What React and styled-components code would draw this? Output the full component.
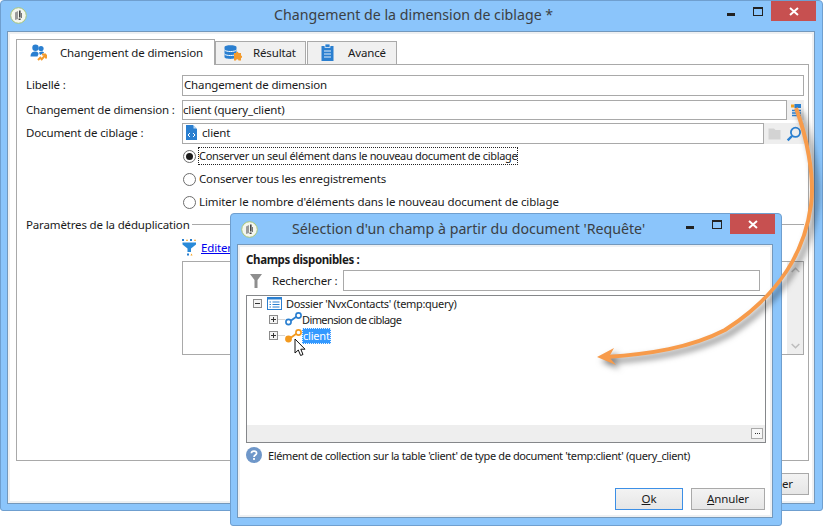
import React from 'react';
import styled, { createGlobalStyle } from 'styled-components';

const Global = createGlobalStyle`
  html, body { margin: 0; padding: 0; background: #fff; }
  body { width: 823px; height: 526px; overflow: hidden; font: 11.5px "Noto Sans", "Open Sans", sans-serif; letter-spacing: -0.15px; color: #1a1a1a; }
  * { box-sizing: border-box; }
`;

const Desktop = styled.div`
  position: relative;
  width: 823px;
  height: 526px;
  overflow: hidden;
`;
const Win = styled.div`
  position: absolute;
  left: ${p => p.$x}px;
  top: ${p => p.$y}px;
  width: ${p => p.$w}px;
  height: ${p => p.$h}px;
  display: flex;
  flex-direction: column;
  background: #8bc5fb;
  border: 1px solid #6f9fcf;
  border-radius: 4px 4px 3px 3px;
`;
const TitleBar = styled.div`
  height: ${p => p.$h}px;
  flex: none;
  display: flex;
  align-items: flex-start;
  padding-left: ${p => p.$left}px;
`;
const AppIcon = styled.div`
  width: 17px;
  height: 17px;
  flex: none;
  margin-top: ${p => p.$top}px;
`;
const Title = styled.div`
  font-size: 14.2px;
  letter-spacing: 0;
  line-height: 20px;
  margin-top: ${p => p.$top}px;
  margin-left: ${p => p.$ml}px;
  color: #3b3f44;
  white-space: nowrap;
`;
const Controls = styled.div`
  margin-left: auto;
  display: flex;
  align-items: flex-start;
  margin-right: ${p => p.$right}px;
`;
const MinBtn = styled.div`
  width: 8px;
  height: 3px;
  background: #222;
  margin-top: 12px;
`;
const MaxBtn = styled.div`
  width: 10px;
  height: 9px;
  margin: 6px 8px 0 18px;
  border: 1px solid #222;
  border-top-width: 2px;
`;
const CloseBtn = styled.div`
  width: 45px;
  height: 20px;
  background: #c75050;
  color: #fff;
  display: flex;
  align-items: center;
  justify-content: center;
`;
const Client = styled.div`
  flex: 1;
  min-height: 0;
  margin: ${p => p.$m};
  background: #fff;
  border: 1px solid #7398bc;
  box-shadow: inset 2px 2px 0 #eef0f2, inset -2px -2px 0 #eef0f2;
  padding: ${p => p.$p};
  display: flex;
  flex-direction: column;
`;
const Tabs = styled.div`
  display: flex;
  align-items: flex-end;
  height: 25px;
  flex: none;
  position: relative;
  z-index: 1;
  margin-bottom: -1px;
`;
const Tab = styled.div`
  width: ${p => p.$w}px;
  height: ${p => (p.$active ? 26 : 24)}px;
  margin-left: ${p => p.$ml || 0}px;
  display: flex;
  align-items: center;
  padding-left: ${p => p.$pl}px;
  padding-bottom: 1px;
  border: 1px solid #a9a9a9;
  border-bottom: ${p => (p.$active ? 'none' : '1px solid #a9a9a9')};
  background: ${p => (p.$active ? '#fff' : '#f0f0f0')};
`;
const TabLabel = styled.span`
  margin-left: ${p => p.$ml}px;
  white-space: nowrap;
`;
const Panel = styled.div`
  height: 397px;
  flex: none;
  border: 1px solid #a9a9a9;
  padding: 10px 4px 0 9px;
  display: flex;
  flex-direction: column;
`;
const Row = styled.div`
  display: grid;
  grid-template-columns: 156px 1fr;
  align-items: center;
  margin-top: ${p => p.$mt || 0}px;
`;
const Label = styled.label`
  white-space: nowrap;
  padding-bottom: 2px;
`;
const Field = styled.div`
  display: flex;
  height: ${p => p.$h || 21}px;
`;
const Input = styled.div`
  flex: 1;
  min-width: 0;
  align-self: stretch;
  display: flex;
  align-items: center;
  gap: 5px;
  border: 1px solid #a9a9a9;
  padding: 0 0 2px ${p => p.$pl ?? 0}px;
  white-space: nowrap;
`;
const SideBtn = styled.div`
  width: ${p => p.$w}px;
  background: #eeeeee;
  display: flex;
  align-items: center;
  justify-content: center;
`;
const RadioRow = styled.div`
  height: 23px;
  margin-left: 156px;
  display: flex;
  align-items: center;
  gap: 3px;
  margin-top: ${p => p.$mt || 0}px;
`;
const Radio = styled.span`
  width: 13px;
  height: 13px;
  flex: none;
  margin-left: 1px;
  border-radius: 50%;
  border: 1px solid #6d6d6d;
  background: #fff;
  display: flex;
  align-items: center;
  justify-content: center;
  &::after {
    content: '';
    width: 7px;
    height: 7px;
    border-radius: 50%;
    background: ${p => (p.$on ? '#1c1c1c' : 'transparent')};
  }
`;
const RadioText = styled.span`
  white-space: nowrap;
  line-height: 16px;
  font-size: ${p => p.$fs || 11.5}px;
  letter-spacing: ${p => p.$ls ?? -0.15}px;
  margin-top: -1px;
  outline: ${p => (p.$focus ? '1px dotted #222' : 'none')};
`;
const Legend = styled.div`
  height: 22px;
  padding-bottom: 1px;
  display: flex;
  align-items: center;
  gap: 2px;
  white-space: nowrap;
  &::after {
    content: '';
    flex: 1;
    height: 1px;
    background: #a9a9a9;
  }
`;
const LinkRow = styled.div`
  margin: 3px 0 0 156px;
  height: 17px;
  display: flex;
  align-items: center;
  gap: 4px;
`;
const Link = styled.a`
  color: #0000ee;
  text-decoration: underline;
`;
const TextBox = styled.div`
  margin: 5px 0 0 156px;
  height: 94px;
  border: 1px solid #a9a9a9;
  display: flex;
  justify-content: flex-end;
`;
const Scroll = styled.div`
  width: 16px;
  background: #eeeeee;
  display: flex;
  flex-direction: column;
  justify-content: space-between;
  align-items: center;
  padding: 5px 0;
`;
const Footer = styled.div`
  margin-top: ${p => p.$mt};
  margin-right: ${p => p.$mr || 0}px;
  display: flex;
  justify-content: flex-end;
  gap: 8px;
`;
const Button = styled.div`
  height: 22px;
  width: ${p => p.$w}px;
  padding-bottom: 1px;
  background: linear-gradient(#f3f3f3, #e6e6e6);
  border: 1px solid ${p => (p.$primary ? '#3c8fe6' : '#a9a9a9')};
  display: flex;
  align-items: center;
  justify-content: center;
  u { text-decoration: underline; }
`;
const Bold = styled.div`
  font-weight: 700;
  line-height: 16px;
  letter-spacing: -0.35px;
`;
const SearchRow = styled.div`
  display: flex;
  align-items: center;
  margin: 2px 6px 0 4px;
  height: 21px;
`;
const SearchLabel = styled.span`
  margin: 0 6px 0 10px;
  width: 65px;
  white-space: nowrap;
`;
const TreeBox = styled.div`
  margin-top: 4px;
  height: 148px;
  flex: none;
  border: 1px solid #85878a;
  display: flex;
  flex-direction: column;
`;
const TreeBody = styled.div`
  flex: 1;
  padding: 0 0 0 6px;
  font-size: 11px;
`;
const TreeRow = styled.div`
  height: ${p => p.$h || 16.5}px;
  display: flex;
  align-items: center;
  padding-left: ${p => p.$indent}px;
  white-space: nowrap;
`;
const Expander = styled.span`
  width: 9px;
  height: 9px;
  flex: none;
  border: 1px solid #8b8b8b;
  background: #f4f4f4;
  position: relative;
  &::before {
    content: '';
    position: absolute;
    left: 1px;
    top: 3px;
    width: 5px;
    height: 1px;
    background: #333;
  }
  &::after {
    content: '';
    position: absolute;
    left: 3px;
    top: 1px;
    width: 1px;
    height: 5px;
    background: #333;
    display: ${p => (p.$open ? 'none' : 'block')};
  }
`;
const Connector = styled.span`
  width: ${p => p.$w}px;
  height: 1px;
  flex: none;
  background: #d6d6d6;
`;
const NodeIcon = styled.span`
  display: flex;
  flex: none;
  margin-left: ${p => p.$ml || 0}px;
`;
const NodeText = styled.span`
  margin-left: ${p => p.$ml || 0}px;
  line-height: 15px;
  letter-spacing: ${p => p.$ls}px;
`;
const Selected = styled.span`
  background: #3399ff;
  color: #fff;
  outline: 1px dotted #e8f3ff;
  outline-offset: -1px;
  padding: 0 1px;
  line-height: 16px;
  letter-spacing: -0.2px;
`;
const TreeBar = styled.div`
  height: 17px;
  flex: none;
  background: #eeeeee;
  display: flex;
  justify-content: flex-end;
  align-items: center;
  padding-right: 2px;
`;
const MoreBtn = styled.div`
  width: 12px;
  height: 11px;
  border: 1px solid #a9a9a9;
  background: #f7f7f7;
  display: flex;
  align-items: center;
  justify-content: center;
  gap: 1px;
  i { width: 1px; height: 1px; background: #333; display: block; }
`;
const HelpRow = styled.div`
  margin-top: 4px;
  height: 16px;
  display: flex;
  align-items: center;
  gap: 6px;
  white-space: nowrap;
  font-size: 11px;
  letter-spacing: -0.38px;
`;
const Overlay = styled.svg`
  position: absolute;
  left: 0;
  top: 0;
  pointer-events: none;
  filter: drop-shadow(4px 4px 3px rgba(0, 0, 0, 0.55));
`;
const Cursor = styled.svg`
  position: absolute;
  left: 294px;
  top: 338px;
`;

const LogoIcon = () => (
  <svg width="17" height="17" viewBox="0 0 17 17">
    <circle cx="8.5" cy="8.5" r="7.8" fill="#f4f6ee" stroke="#a8c67a" strokeWidth="1" />
    <path d="M5 5.5 L8 4 V12 L5 13 Z" fill="#9a9a9a" />
    <path d="M9 3.5 h1.6 v7 H9 Z M8.6 11.5 h2 v1.6 h-2 Z" fill="#444" />
    <path d="M11.5 6 v5" stroke="#777" strokeWidth="1" />
  </svg>
);
const XGlyph = () => (
  <svg width="10" height="9" viewBox="0 0 10 9">
    <path d="M1 1 L9 8 M9 1 L1 8" stroke="#fff" strokeWidth="2" />
  </svg>
);
const UsersIcon = () => (
  <svg width="17" height="17" viewBox="0 0 17 17" style={{ flex: 'none' }}>
    <circle cx="5.5" cy="3.8" r="3.2" fill="#2a7fd0" />
    <path d="M0.5 12.5 C0.5 8.5 3 7.5 5.5 7.5 C8 7.5 8.5 9 8.5 10 L7.5 12.5 Z" fill="#2a7fd0" />
    <circle cx="11" cy="4.5" r="2.6" fill="#2a7fd0" />
    <path d="M9 8.5 C11 7 14 7.5 14 9 L10 11 Z" fill="#2a7fd0" />
    <path d="M8 16 L11 13 M11 16 L16 10.5 M16 10.5 V14.5 M16 10.5 H12" stroke="#f39a2c" strokeWidth="2" fill="none" />
  </svg>
);
const DbIcon = () => (
  <svg width="18" height="17" viewBox="0 0 18 17" style={{ flex: 'none' }}>
    <path d="M0.5 3 C0.5 0.5 12.5 0.5 12.5 3 V13 C12.5 15.5 0.5 15.5 0.5 13 Z" fill="#2a7fd0" />
    <path d="M0.5 6 C2 8 11 8 12.5 6 M0.5 10 C2 12 11 12 12.5 10" stroke="#fff" strokeWidth="1" fill="none" />
    <path d="M10 9 h2 a1.2 1.2 0 0 1 2.4 0 h2.6 v2.5 a1.2 1.2 0 0 1 0 2.5 v2.6 h-2.5 a1.2 1.2 0 0 0-2.5 0 H10 Z" fill="#f39a2c" />
  </svg>
);
const ClipIcon = () => (
  <svg width="13" height="17" viewBox="0 0 13 17" style={{ flex: 'none' }}>
    <rect x="0.5" y="2" width="12" height="15" fill="#2a7fd0" />
    <rect x="4" y="0" width="5" height="3.5" fill="#2a7fd0" stroke="#fff" strokeWidth="0.7" />
    <path d="M3 7 h7 M3 10 h7 M3 13 h7" stroke="#dfeefb" strokeWidth="1" />
  </svg>
);
const DocIcon = () => (
  <svg width="11" height="15" viewBox="0 0 11 15" style={{ flex: 'none' }}>
    <path d="M0 0 H7 L11 4 V15 H0 Z" fill="#2a7fd0" />
    <path d="M7.5 0 L11 3.5 H7.5 Z" fill="#bcd9f3" />
    <path d="M4 8 L2 10 L4 12 M7 8 L9 10 L7 12" stroke="#fff" strokeWidth="1" fill="none" />
  </svg>
);
const ListMiniIcon = () => (
  <svg width="12" height="13" viewBox="0 0 12 13">
    <rect x="1" y="0.5" width="3.5" height="3" fill="#f3a21f" />
    <rect x="4.5" y="0" width="6.5" height="4" fill="#2a7fd0" />
    <path d="M2 6.5 H11 M2 9 H11 M2 11.5 H11" stroke="#2a7fd0" strokeWidth="1.3" />
  </svg>
);
const FolderIcon = () => (
  <svg width="13" height="12" viewBox="0 0 13 12">
    <path d="M0.5 0.5 H6 L7.5 2 H12.5 V11.5 H0.5 Z" fill="#d3d3d3" />
  </svg>
);
const SearchIcon = () => (
  <svg width="16" height="16" viewBox="0 0 16 16">
    <circle cx="9.5" cy="6.3" r="4.6" fill="none" stroke="#2a7fd0" strokeWidth="1.8" />
    <path d="M6 10 L1.7 14.3" stroke="#2a7fd0" strokeWidth="2.4" />
  </svg>
);
const FilterDots = () => (
  <svg width="15" height="17" viewBox="0 0 15 17" style={{ flex: 'none' }}>
    <rect x="0" y="0" width="2" height="2" fill="#2a7fd0" />
    <path d="M4 2 L5 0 L6 2 Z" fill="#f3a21f" />
    <rect x="8" y="0" width="2" height="2" fill="#2a7fd0" />
    <path d="M12 2 L13 0 L14 2 Z" fill="#f3a21f" />
    <path d="M0.5 3.5 H14 V5.5 L9 9.5 V13 H5.5 V9.5 L0.5 5.5 Z" fill="#2a8ad8" />
    <rect x="5" y="14.5" width="2" height="2" fill="#2a7fd0" />
    <path d="M8.5 16.5 L9.5 14.5 L10.5 16.5 Z" fill="#f3a21f" />
  </svg>
);
const GreyFunnel = () => (
  <svg width="12" height="14" viewBox="0 0 12 14" style={{ flex: 'none' }}>
    <path d="M0 0 H12 L7.5 6 V14 H4.5 V6 Z" fill="#8e8e8e" />
  </svg>
);
const Chevron = ({ up }) => (
  <svg width="9" height="6" viewBox="0 0 9 6">
    <path d={up ? 'M0.7 5 L4.5 1.3 L8.3 5' : 'M0.7 1 L4.5 4.7 L8.3 1'} stroke="#bdbdbd" strokeWidth="1.6" fill="none" />
  </svg>
);
const ListIcon = () => (
  <svg width="15" height="13" viewBox="0 0 15 13">
    <rect x="0.5" y="0.5" width="14" height="12" fill="#fff" stroke="#2a7fd0" />
    <rect x="0.5" y="0.5" width="14" height="2" fill="#2a7fd0" />
    <path d="M2.5 5 h1.5 M5.5 5 h7 M2.5 7.5 h1.5 M5.5 7.5 h7 M2.5 10 h1.5 M5.5 10 h7" stroke="#2a7fd0" strokeWidth="1" />
  </svg>
);
const LinkIcon = ({ color, solid }) => (
  <svg width="17" height="14" viewBox="0 0 17 14">
    <path d="M4 10 L13 3.5" stroke={color} strokeWidth="1.8" />
    <circle cx="3.5" cy="10" r="2.6" fill={solid ? color : '#fff'} stroke={color} strokeWidth="1.6" />
    <circle cx="13.5" cy="3.5" r="2.6" fill="#fff" stroke={color} strokeWidth="1.6" />
  </svg>
);
const HelpIcon = () => (
  <svg width="16" height="16" viewBox="0 0 16 16" style={{ flex: 'none' }}>
    <circle cx="8" cy="8" r="8" fill="#6f97c9" />
    <path d="M5.4 6.2 C5.4 3.4 10.6 3.4 10.6 6.2 C10.6 8 8 8 8 10" stroke="#fff" strokeWidth="1.7" fill="none" />
    <rect x="7.1" y="11" width="1.8" height="1.9" fill="#fff" />
  </svg>
);

export default function App() {
  return (
    <Desktop>
      <Global />
      <Win $x={0} $y={0} $w={823} $h={511}>
        <TitleBar $h={30} $left={9}>
          <AppIcon $top={6}><LogoIcon /></AppIcon>
          <Title $top={4} $ml={247}>Changement de la dimension de ciblage *</Title>
          <Controls $right={6}>
            <MinBtn />
            <MaxBtn />
            <CloseBtn><XGlyph /></CloseBtn>
          </Controls>
        </TitleBar>
        <Client $m="0 7px 6px 6px" $p="8px 5px 0 8px">
          <Tabs>
            <Tab $active $w={199} $pl={13}><UsersIcon /><TabLabel $ml={13}>Changement de dimension</TabLabel></Tab>
            <Tab $w={91} $pl={8}><DbIcon /><TabLabel $ml={11}>Résultat</TabLabel></Tab>
            <Tab $w={90} $pl={13} $ml={1}><ClipIcon /><TabLabel $ml={14}>Avancé</TabLabel></Tab>
          </Tabs>
          <Panel>
            <Row>
              <Label>Libellé :</Label>
              <Field><Input $pl={1}>Changement de dimension</Input></Field>
            </Row>
            <Row $mt={4}>
              <Label>Changement de dimension :</Label>
              <Field $h={20}>
                <Input>client (query_client)</Input>
                <SideBtn $w={17}><ListMiniIcon /></SideBtn>
              </Field>
            </Row>
            <Row $mt={3}>
              <Label>Document de ciblage :</Label>
              <Field>
                <Input $pl={3}><DocIcon />client</Input>
                <SideBtn $w={20}><FolderIcon /></SideBtn>
                <SideBtn $w={20}><SearchIcon /></SideBtn>
              </Field>
            </Row>
            <RadioRow $mt={1}><Radio $on /><RadioText $focus $fs={11} $ls={-0.31}>Conserver un seul élément dans le nouveau document de ciblage</RadioText></RadioRow>
            <RadioRow><Radio /><RadioText>Conserver tous les enregistrements</RadioText></RadioRow>
            <RadioRow><Radio /><RadioText $ls={-0.1}>Limiter le nombre d'éléments dans le nouveau document de ciblage</RadioText></RadioRow>
            <Legend>Paramètres de la déduplication</Legend>
            <LinkRow><FilterDots /><Link>Editer</Link></LinkRow>
            <TextBox>
              <Scroll><Chevron up /><Chevron /></Scroll>
            </TextBox>
          </Panel>
          <Footer $mt="12px"><Button $w={74}>Annuler</Button></Footer>
        </Client>
      </Win>

      <Win $x={230} $y={213} $w={552} $h={313}>
        <TitleBar $h={30} $left={10}>
          <AppIcon $top={7}><LogoIcon /></AppIcon>
          <Title $top={5} $ml={34}>Sélection d'un champ à partir du document 'Requête'</Title>
          <Controls $right={6}>
            <MinBtn />
            <MaxBtn />
            <CloseBtn><XGlyph /></CloseBtn>
          </Controls>
        </TitleBar>
        <Client $m="0 8px 7px 6px" $p="7px 6px 7px 8px">
          <Bold>Champs disponibles :</Bold>
          <SearchRow>
            <GreyFunnel />
            <SearchLabel>Rechercher :</SearchLabel>
            <Input />
          </SearchRow>
          <TreeBox>
            <TreeBody>
              <TreeRow $indent={0} $h={15}><Expander $open /><NodeIcon $ml={5}><ListIcon /></NodeIcon><NodeText $ml={4} $ls={-0.31}>Dossier 'NvxContacts' (temp:query)</NodeText></TreeRow>
              <TreeRow $indent={16}><Expander /><Connector $w={7} /><LinkIcon color="#2a7fd0" /><NodeText $ls={-0.6}>Dimension de ciblage</NodeText></TreeRow>
              <TreeRow $indent={16}><Expander /><Connector $w={7} /><LinkIcon color="#f39a1f" solid /><Selected>client</Selected></TreeRow>
            </TreeBody>
            <TreeBar><MoreBtn><i /><i /><i /></MoreBtn></TreeBar>
          </TreeBox>
          <HelpRow><HelpIcon />Elément de collection sur la table 'client' de type de document 'temp:client' (query_client)</HelpRow>
          <Footer $mt="auto" $mr={1}><Button $primary $w={68}><span><u>O</u>k</span></Button><Button $w={74}><span><u>A</u>nnuler</span></Button></Footer>
        </Client>
      </Win>

      <Cursor width="14" height="19" viewBox="0 0 14 19">
        <path d="M1 1 V15 L4.3 12 L6.6 17.5 L9 16.5 L6.8 11.2 H11 Z" fill="#fff" stroke="#111" strokeWidth="1" />
      </Cursor>
      <Overlay width="823" height="526" viewBox="0 0 823 526">
        <path d="M796 108 C806 135 815 175 811 205 C805 250 780 295 725 330 C690 348 650 354 606 357" fill="none" stroke="#f79b4b" strokeWidth="4" />
        <path d="M597 357 L614 348 L609 357 L616 365 Z" fill="#f79b4b" />
      </Overlay>
    </Desktop>
  );
}
